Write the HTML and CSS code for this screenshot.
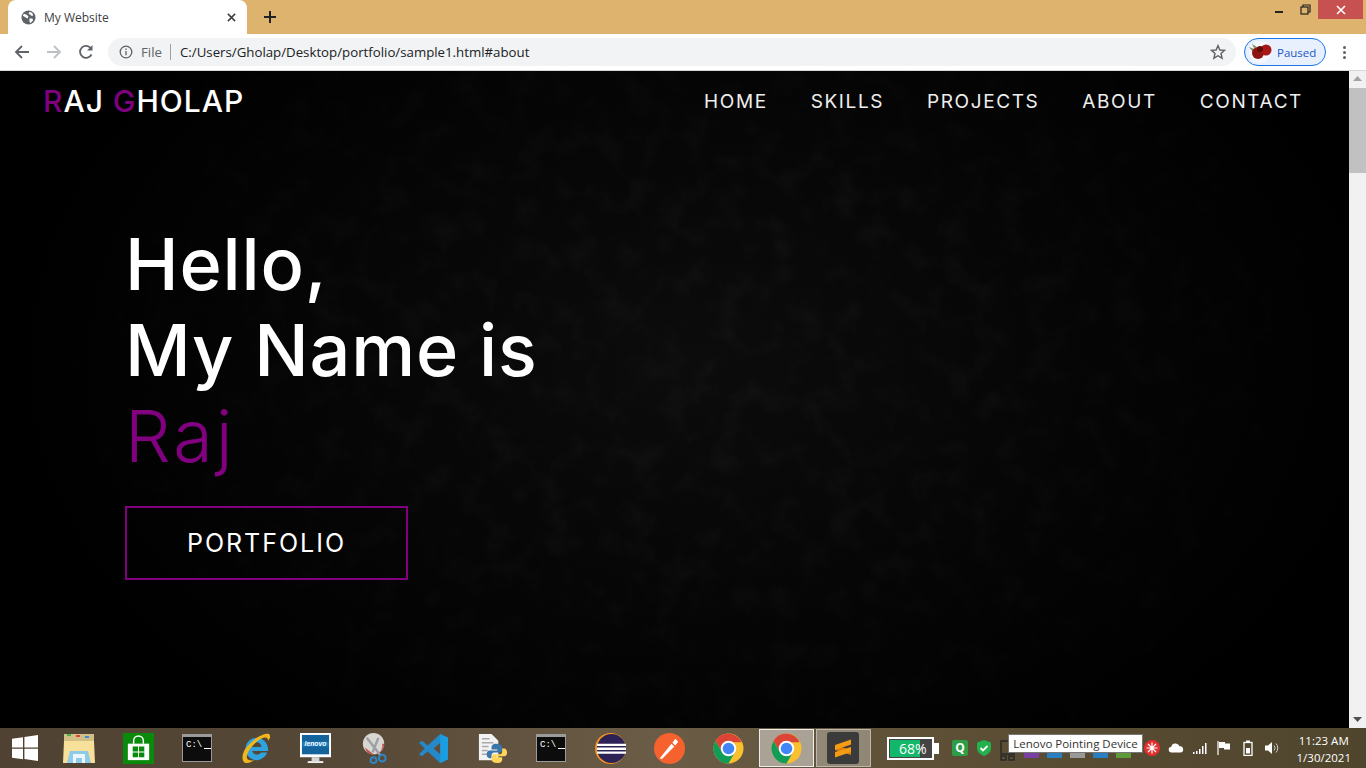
FILE: index.html
```html
<!DOCTYPE html>
<html>
<head>
  <title>My Website</title>
  <meta charset="UTF-8">
  <link rel="stylesheet" href="styles.css">
</head>
<body>
  <div class="tabstrip">
    <div class="tab">
      <svg class="favicon" viewBox="0 0 16 16"><circle cx="8" cy="8" r="7.500" fill="#5f6368"/><path d="M3 4l3 1 2 2-1 2-2-1-3-2zM9 2l3 1 1 3-2 0-1-1-2-1zM9 9l3 0 1 2-3 3-1-2z" fill="#fff"/></svg>
      <span class="tab-title">My Website</span>
      <svg class="tab-close" viewBox="0 0 10 10"><path d="M1 1l8 8M9 1l-8 8" stroke="#3c4043" stroke-width="1.700"/></svg>
    </div>
    <svg class="new-tab" viewBox="0 0 12 12"><path d="M6 0v12M0 6h12" stroke="#202124" stroke-width="2"/></svg>
    <div class="window-controls">
      <div class="win-btn"><svg width="10" height="10" viewBox="0 0 10 10"><path d="M1 7h8" stroke="#222" stroke-width="2"/></svg></div>
      <div class="win-btn"><svg width="11" height="11" viewBox="0 0 11 11" fill="none" stroke="#222" stroke-width="1.200"><rect x="1" y="3" width="7" height="7"/><path d="M3 3V1h7v7H8"/></svg></div>
      <div class="win-btn win-close"><svg width="10" height="10" viewBox="0 0 10 10"><path d="M1 1l8 8M9 1l-8 8" stroke="#fff" stroke-width="1.600"/></svg></div>
    </div>
  </div>

  <div class="toolbar">
    <svg class="nav-icon" viewBox="0 0 16 16" fill="none" stroke="#5f6368" stroke-width="1.800"><path d="M15 8H2M8 2L2 8l6 6"/></svg>
    <svg class="nav-icon" viewBox="0 0 16 16" fill="none" stroke="#bdc1c6" stroke-width="1.800"><path d="M1 8h13M8 2l6 6-6 6"/></svg>
    <svg class="nav-icon" viewBox="0 0 16 16" fill="none" stroke="#5f6368" stroke-width="1.800"><path d="M13.500 10.500A6 6 0 1 1 13 4.500"/><path d="M14.500 1v5.500H9z" fill="#5f6368" stroke="none"/></svg>
    <div class="omnibox">
      <svg class="info-icon" viewBox="0 0 14 14" fill="none" stroke="#5f6368" stroke-width="1.300"><circle cx="7" cy="7" r="5.800"/><path d="M7 6v4.200M7 3.600v1.300"/></svg>
      <span class="scheme">File</span>
      <span class="omni-sep"></span>
      <span class="url">C:/Users/Gholap/Desktop/portfolio/sample1.html#about</span>
      <svg class="star" viewBox="0 0 16 16" fill="none" stroke="#5f6368" stroke-width="1.400"><path d="M8 1.600l1.900 4.400 4.700.4-3.600 3.100 1.100 4.700L8 11.700l-4.100 2.500L5 9.500 1.400 6.400l4.700-.4z"/></svg>
    </div>
    <div class="profile">
      <svg class="avatar" viewBox="0 0 24 22"><circle cx="12" cy="11" r="11" fill="#f4f7fd"/><path d="M1 6l5 2-1 3zM4 3l5 3-3 1z" fill="#7c8f62"/><circle cx="10" cy="12" r="6" fill="#8e1414"/><circle cx="18" cy="9" r="5.500" fill="#a81818"/><circle cx="12" cy="8" r="3" fill="#5f0c0c"/></svg>
      <span>Paused</span>
    </div>
    <div class="menu-dots"><i></i><i></i><i></i></div>
  </div>

  <div class="viewport">
    <div class="site">
      <svg class="grain"><filter id="mottle"><feTurbulence type="fractalNoise" baseFrequency="0.035" numOctaves="4" seed="7"/><feColorMatrix values="0 0 0 0 1  0 0 0 0 1  0 0 0 0 1  1.200 0 0 0 -0.540"/></filter><rect width="100%" height="100%" filter="url(#mottle)"/></svg>
      <header class="site-header">
        <div class="logo"><b>R</b>AJ <b>G</b>HOLAP</div>
        <nav class="site-nav">
          <a>HOME</a>
          <a>SKILLS</a>
          <a>PROJECTS</a>
          <a>ABOUT</a>
          <a>CONTACT</a>
        </nav>
      </header>
      <section class="hero">
        <h1>Hello,<br>My Name is<br><span>Raj</span></h1>
        <a class="hero-btn">PORTFOLIO</a>
      </section>
    </div>
    <div class="scrollbar">
      <svg width="9" height="5" viewBox="0 0 9 5"><path d="M4.500 0L9 5H0z" fill="#a3a3a3"/></svg>
      <div class="thumb"></div>
      <svg class="arrow-down" width="9" height="5" viewBox="0 0 9 5"><path d="M4.500 5L9 0H0z" fill="#505050"/></svg>
    </div>
  </div>

  <div class="taskbar">
    <svg class="start" viewBox="0 0 26 26"><path d="M0 3.700l11-1.500v10.300H0zM12.400 2L26 0v12.500H12.400zM0 13.800h11v10.400L0 22.700zM12.400 13.800H26V26l-13.600-1.900z" fill="#fff"/></svg>

    <div class="task"><svg class="icon-wide" viewBox="0 0 32 32"><path d="M1 2h30v10H1z" fill="#d2bf86"/><path d="M1 9h30l1 22H0z" fill="#f7e09a"/><path d="M7 19h18l3 12H4z" fill="#8fcbe8"/><path d="M10 22h12v9h-3v-5h-6v5h-3z" fill="#e9f6fc"/><rect x="4" y="2" width="4" height="2" fill="#43b649"/><rect x="13" y="3" width="4" height="2" fill="#d8453c"/><rect x="22" y="4" width="4" height="2" fill="#3c8fdc"/></svg></div>
    <div class="task"><svg viewBox="0 0 32 32"><rect width="32" height="32" fill="#0a8a0a"/><path d="M5 11h22v17H5z" fill="#fff"/><path d="M11 11V8a5 5 0 0 1 10 0v3" fill="none" stroke="#fff" stroke-width="1.500"/><path d="M10 14h5.500v5H10zM16.500 14H22v5h-5.500zM10 20h5.500v5H10zM16.500 20H22v5h-5.500z" fill="#0a8a0a"/></svg></div>
    <div class="task"><div class="cmd"><span>C:\</span><i></i></div></div>
    <div class="task"><svg viewBox="0 0 32 32"><path d="M16 5a11.500 11.500 0 1 0 11 15h-6.500a5 5 0 0 1-9-1.500H28C28.500 11 23 5 16 5zm-5 9.500a5 5 0 0 1 10 0z" fill="#2ea3e0"/><path d="M29 1C24-1 12 6 4 17c-4 7-3 14 2 14 3 0 6-2 8-3-4 1-8 0-8-3 0-6 8-16 17-20 3-1 5 0 5 3l2-3c0-2 0-3-1-4z" fill="#f2b71f"/></svg></div>
    <div class="task"><svg viewBox="0 0 32 32"><rect x="0" y="0" width="32" height="25" fill="#fff"/><rect x="2" y="2" width="28" height="20" fill="#14639a"/><rect x="2" y="9" width="28" height="5" fill="#1b7cbd"/><rect x="12" y="25" width="8" height="4" fill="#d4d4d4"/><rect x="8" y="29" width="16" height="2" fill="#eee"/><text x="16" y="13" class="lenovo-mark">lenovo</text></svg></div>
    <div class="task"><svg viewBox="0 0 32 32"><circle cx="15" cy="11" r="11" fill="#d9d6d2"/><path d="M15 22a11 11 0 0 0 11-11l-2 0a9 9 0 0 1-18 4z" fill="#c25050"/><path d="M8 5l14 18M20 5L14 20" stroke="#9aa0a6" stroke-width="2.500"/><circle cx="24" cy="26" r="3.500" fill="none" stroke="#2f86c6" stroke-width="2"/><circle cx="15" cy="28" r="3" fill="none" stroke="#2f86c6" stroke-width="2"/></svg></div>
    <div class="task"><svg viewBox="0 0 32 32"><path d="M23 1l8 4v22l-8 4L10 19l-6 5-3-2 6-6-6-6 3-2 6 5zm0 9l-7 6 7 6z" fill="#2489ca"/><path d="M23 1l8 4v22l-8 4z" fill="#1b9de2"/></svg></div>
    <div class="task"><svg viewBox="0 0 32 32"><path d="M2 1h13l7 7v20H2z" fill="#f2f2f2"/><path d="M5 6h8M5 10h12M5 14h7M5 18h6M5 22h6" stroke="#aaa" stroke-width="1.500"/><path d="M20 11c-4 0-5 2-5 4v2h6v1h-8c-2 0-3 2-3 4s1 4 3 4h2v-3c0-2 1-3 3-3h5c2 0 3-1 3-3v-2c0-2-2-4-6-4z" fill="#3a76a8"/><path d="M21 31c4 0 5-2 5-4v-2h-6v-1h8c2 0 3-2 3-4s-1-4-3-4h-2v3c0 2-1 3-3 3h-5c-2 0-3 1-3 3v2c0 2 2 4 6 4z" fill="#ffd65c"/></svg></div>
    <div class="task"><div class="cmd"><span>C:\</span><i></i></div></div>
    <div class="task"><svg viewBox="0 0 32 32"><circle cx="16" cy="16" r="16" fill="#f7941e"/><circle cx="17" cy="16" r="15" fill="#2c2255"/><path d="M2 11h30v2.500H2zM2 15h30v2.500H2zM2 19h30v2.500H2z" fill="#fff"/></svg></div>
    <div class="task"><svg viewBox="0 0 32 32"><circle cx="16" cy="16" r="16" fill="#f5622e"/><path d="M6 26l12-15 3 3L8 27zM19 10l3-4 3 3-3 4z" fill="#fff"/></svg></div>
    <div class="task"><svg viewBox="0 0 32 32"><use href="#chrome"/></svg></div>
    <div class="task task-active"><svg viewBox="0 0 32 32"><defs><g id="chrome"><circle cx="16" cy="16" r="15.500" fill="#fbc02d"/><path d="M16 .5A15.500 15.500 0 0 0 2.600 8.200L9.500 20 16 9.500h13.400A15.500 15.500 0 0 0 16 .5z" fill="#db4437"/><path d="M2.600 8.200A15.500 15.500 0 0 0 16 31.500L22.500 20H9.500z" fill="#0f9d58"/><circle cx="16" cy="16" r="8" fill="#fff"/><circle cx="16" cy="16" r="6" fill="#4285f4"/></g></defs><use href="#chrome"/></svg></div>
    <div class="task task-open"><div class="sublime"><svg viewBox="0 0 20 22"><path d="M2 8l16 5v5L2 13z" fill="#d97f0a"/><path d="M2 8l16-5.500v5L2 13zM2 15l16-5v5L2 20.500z" fill="#f59b14"/></svg></div></div>

    <div class="tray">
      <div class="battery"><div class="battery-cell"><span>68%</span></div></div>
      <div class="tray-q">Q</div>
      <svg class="tray-ico" viewBox="0 0 16 16"><path d="M8 0l7 2.500V8c0 4-3 6.500-7 8-4-1.500-7-4-7-8V2.500z" fill="#22b14c"/><path d="M4.500 8l2.500 2.500 4.500-4.500" fill="none" stroke="#fff" stroke-width="1.800"/></svg>
      <div class="tray-hidden">
        <svg width="16" height="22" viewBox="0 0 16 22" fill="none" stroke="#2a2a2a" stroke-width="1.500"><rect x="1" y="1" width="13" height="13"/><rect x="1" y="16" width="5" height="4"/><rect x="9" y="16" width="5" height="4"/></svg>
        <i class="peek peek-purple"></i>
        <i class="peek peek-blue"></i>
        <i class="peek peek-grey"></i>
        <i class="peek peek-blue"></i>
        <i class="peek peek-green"></i>
      </div>
      <svg class="tray-ico" viewBox="0 0 16 16"><circle cx="8" cy="8" r="8" fill="#e02f2f"/><path d="M8 2.500v11M2.500 8h11M4 4l8 8M12 4l-8 8" stroke="#fff" stroke-width="1.200"/></svg>
      <svg class="tray-ico" viewBox="0 0 18 12"><path d="M4 11a3 3 0 0 1-.5-6A5 5 0 0 1 13 4a3.500 3.500 0 0 1 1 7z" fill="#fff"/></svg>
      <svg class="tray-ico" viewBox="0 0 16 12"><path d="M1 10h1.500v2H1zM4 9h1.500v3H4zM7 7h1.500v5H7zM10 4h1.500v8H10zM13 1h1.500v11H13z" fill="#fff"/></svg>
      <svg class="tray-ico" viewBox="0 0 16 16"><path d="M2 1v14" stroke="#fff" stroke-width="1.200"/><path d="M3 2h6v1.500h5v6H8V8H3z" fill="#fff"/></svg>
      <svg class="tray-ico" viewBox="0 0 16 16"><rect x="4" y="2.500" width="8" height="13" fill="none" stroke="#fff" stroke-width="1.300"/><rect x="6" y="0.500" width="4" height="2" fill="#fff"/><rect x="6" y="8" width="4" height="5.500" fill="#fff"/></svg>
      <svg class="tray-ico" viewBox="0 0 16 16"><path d="M1 5.500h3L8 2v12l-4-3.500H1z" fill="#fff"/><path d="M10 5.500a3.500 3.500 0 0 1 0 5M12 3.500a6.500 6.500 0 0 1 0 9" fill="none" stroke="#cfcfcf" stroke-width="1"/></svg>
      <div class="clock"><span>11:23 AM</span><span>1/30/2021</span></div>
    </div>
    <div class="tooltip">Lenovo Pointing Device</div>
  </div>
</body>
</html>
```

FILE: styles.css
```css
html, body {
  margin: 0;
  padding: 0;
  height: 768px;
  overflow: hidden;
  font-family: "Open Sans", "Liberation Sans", sans-serif;
}
.tabstrip {
  height: 34px;
  background: #deb36d;
  display: flex;
  align-items: flex-end;
  padding-left: 8px;
}
.tab {
  width: 239px;
  height: 34px;
  background: #fff;
  border-radius: 8px 8px 0 0;
  display: flex;
  align-items: center;
  padding: 0 9px 0 13px;
  box-sizing: border-box;
  font-size: 12px;
  color: #3c4043;
}
.favicon {
  width: 15px;
  height: 15px;
  margin-right: 8px;
}
.tab-title {
  flex: 1;
}
.tab-close {
  width: 9px;
  height: 9px;
  margin-right: 2px;
}
.new-tab {
  width: 12px;
  height: 12px;
  margin: 0 0 11px 17px;
}
.window-controls {
  margin-left: auto;
  align-self: flex-start;
  display: flex;
  padding-right: 3px;
}
.win-btn {
  width: 26px;
  height: 19px;
  display: flex;
  align-items: center;
  justify-content: center;
}
.win-btn.win-close {
  width: 45px;
  background: #c75050;
}
.toolbar {
  height: 36px;
  background: #fff;
  border-bottom: 1px solid #d8d8d8;
  display: flex;
  align-items: center;
  padding: 0 12px 0 14px;
}
.nav-icon {
  width: 16px;
  height: 16px;
  margin-right: 16px;
}
.omnibox {
  width: 1128px;
  height: 28px;
  margin-left: -2px;
  background: #f1f3f4;
  border-radius: 14px;
  display: flex;
  align-items: center;
  font-size: 13.250px;
  box-sizing: border-box;
  padding: 0 10px 0 11px;
}
.info-icon {
  width: 14px;
  height: 14px;
  margin-right: 8px;
}
.scheme {
  color: #5f6368;
}
.omni-sep {
  width: 1px;
  height: 16px;
  background: #9aa0a6;
  margin: 0 9px 0 8px;
}
.url {
  color: #202124;
  flex: 1;
}
.star {
  width: 16px;
  height: 16px;
}
.profile {
  width: 82px;
  height: 28px;
  box-sizing: border-box;
  margin-left: 8px;
  border: 1px solid #1a73e8;
  border-radius: 14px;
  background: #e8f0fe;
  display: flex;
  align-items: center;
  padding-left: 3px;
  color: #1a56c4;
  font-size: 11.500px;
  gap: 5px;
}
.avatar {
  width: 24px;
  height: 22px;
}
.menu-dots {
  margin-left: 17px;
  display: flex;
  flex-direction: column;
  gap: 2px;
}
.menu-dots i {
  width: 3px;
  height: 3px;
  border-radius: 50%;
  background: #5f6368;
}
.viewport {
  height: 657px;
  display: flex;
}
.site {
  flex: 1;
  position: relative;
  color: #fff;
  background-color: #000;
  background-image: radial-gradient(ellipse 700px 480px at 700px 290px, #0c0c0c, #000);
  font-family: Inter, "Open Sans", sans-serif;
}
.grain {
  position: absolute;
  inset: 0;
  width: 100%;
  height: 100%;
  opacity: 0.05;
  -webkit-mask-image: radial-gradient(ellipse 700px 500px at 700px 290px, #000 40%, transparent);
  mask-image: radial-gradient(ellipse 700px 500px at 700px 290px, #000 40%, transparent);
}
.site-header, .hero {
  position: relative;
}
.site-header {
  height: 60px;
  display: flex;
  justify-content: space-between;
  align-items: center;
  padding: 0 46px 0 43px;
}
.logo {
  font-size: 30px;
  font-weight: 500;
  letter-spacing: 1px;
}
.logo b {
  color: #800080;
  font-weight: 500;
}
.site-nav {
  display: flex;
  gap: 43px;
}
.site-nav a {
  font-size: 19px;
  letter-spacing: 1.600px;
  color: #eee;
}
.hero {
  padding: 0 0 0 125px;
}
.hero h1 {
  margin: 0;
  padding: 90px 0 0 0;
  font-size: 72px;
  line-height: 86px;
  font-weight: 500;
  letter-spacing: 0.800px;
}
.hero h1 span {
  color: #800080;
  font-weight: 300;
  letter-spacing: 3px;
}
.hero-btn {
  margin-top: 27px;
  width: 283px;
  height: 74px;
  box-sizing: border-box;
  border: 2px solid #800080;
  display: flex;
  align-items: center;
  justify-content: center;
  font-size: 25px;
  letter-spacing: 2px;
}
.scrollbar {
  width: 17px;
  background: #f1f1f1;
  display: flex;
  flex-direction: column;
  align-items: center;
  padding-top: 5px;
  box-sizing: border-box;
}
.thumb {
  width: 100%;
  height: 85px;
  background: #c1c1c1;
  margin-top: 7px;
}
.arrow-down {
  margin-top: auto;
  margin-bottom: 6px;
}
.taskbar {
  height: 40px;
  position: relative;
  display: flex;
  align-items: center;
  background: linear-gradient(90deg, #504232, #564836 25%, #6a5c46 48%, #5c4f35 70%, #4f452d 100%);
}
.start {
  width: 26px;
  height: 26px;
  margin: 0 11.500px 0 12px;
  flex: none;
}
.task {
  width: 59px;
  height: 38px;
  box-sizing: border-box;
  display: flex;
  align-items: center;
  justify-content: center;
  flex: none;
}
.task svg {
  width: 31px;
  height: 31px;
}
.task svg.icon-wide {
  width: 32px;
  height: 32px;
}
.task-active {
  width: 55px;
  margin: 0 1px;
  background: rgba(255, 255, 255, 0.45);
  border: 1px solid #eee;
}
.task-open {
  width: 55px;
  margin: 0 1px;
  background: rgba(255, 255, 255, 0.3);
  border: 1px solid rgba(255, 255, 255, 0.4);
}
.cmd {
  width: 30px;
  height: 28px;
  background: #0c0c0c;
  border: 1px solid #9a9a9a;
  border-top-width: 3px;
  box-sizing: border-box;
  color: #fff;
  font-family: "Liberation Mono", monospace;
  font-size: 9px;
  padding: 3px 0 0 3px;
  display: flex;
  align-items: flex-start;
  gap: 2px;
}
.cmd i {
  width: 7px;
  height: 1px;
  background: #fff;
  margin-top: 8px;
}
.lenovo-mark {
  fill: #fff;
  font-family: "Liberation Sans", sans-serif;
  font-size: 7px;
  font-style: italic;
  font-weight: bold;
  text-anchor: middle;
}
.sublime {
  width: 32px;
  height: 32px;
  background: #3b3b3b;
  border-radius: 3px;
  display: flex;
  align-items: center;
  justify-content: center;
}
.task .sublime svg {
  width: 20px;
  height: 22px;
}
.tray {
  margin-left: 15.500px;
  flex: 1;
  display: flex;
  align-items: center;
  gap: 8px;
  height: 100%;
}
.battery {
  width: 47px;
  height: 23px;
  box-sizing: border-box;
  border: 2px solid #fff;
  padding: 1px;
  margin-right: 10px;
  background: #444;
  position: relative;
}
.battery::after {
  content: "";
  position: absolute;
  right: -7px;
  top: 4px;
  width: 5px;
  height: 11px;
  background: #fff;
}
.battery-cell {
  width: 72%;
  height: 100%;
  background: #12b76a;
  color: #fff;
  font-size: 14px;
  line-height: 17px;
  white-space: nowrap;
  padding-left: 9px;
  box-sizing: border-box;
}
.tray-q {
  width: 16px;
  height: 16px;
  background: #2e9e46;
  color: #fff;
  font-size: 12px;
  font-weight: bold;
  line-height: 16px;
  text-align: center;
  border-radius: 2px;
}
.tray-ico {
  width: 16px;
  height: 16px;
  flex: none;
}
.tray-hidden {
  width: 136px;
  height: 22px;
  margin-top: 6px;
  display: flex;
  align-items: flex-end;
  gap: 8px;
}
.peek {
  width: 15px;
  height: 5px;
  margin-bottom: 4px;
}
.peek-purple {
  background: #7a3fa0;
}
.peek-blue {
  background: #2a7fc0;
}
.peek-grey {
  background: #9a9a9a;
}
.peek-green {
  background: #5f9a3a;
}
.clock {
  margin-left: auto;
  margin-right: 15px;
  margin-top: 1px;
  display: flex;
  flex-direction: column;
  align-items: center;
  color: #fff;
  font-size: 11.500px;
  line-height: 17px;
}
.tooltip {
  position: absolute;
  left: 1008px;
  top: 6px;
  width: 135px;
  height: 19px;
  box-sizing: border-box;
  background: #fff;
  border: 1px solid #767676;
  color: #333;
  font-size: 11.500px;
  line-height: 17px;
  text-align: center;
  white-space: nowrap;
}
```
